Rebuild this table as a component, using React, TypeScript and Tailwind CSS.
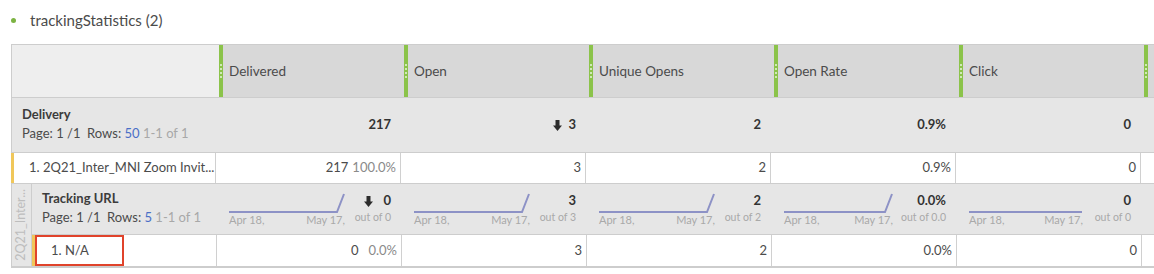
import React from "react";

interface Metric {
  name: string;
  total: string;
  totalArrow?: boolean;
  value: string;
  pct?: string;
  sub: string;
  outOf: string;
  subArrow?: boolean;
  subValue: string;
  subPct?: string;
  rise: boolean;
  spark: number;
  noDates?: boolean;
}

const metrics: Metric[] = [
  { name: "Delivered", total: "217", value: "217", pct: "100.0%", sub: "0", outOf: "out of 0", subArrow: true, subValue: "0", subPct: "0.0%", rise: true, spark: 116 },
  { name: "Open", total: "3", totalArrow: true, value: "3", sub: "3", outOf: "out of 3", subValue: "3", rise: true, spark: 116 },
  { name: "Unique Opens", total: "2", value: "2", sub: "2", outOf: "out of 2", subValue: "2", rise: true, spark: 116 },
  { name: "Open Rate", total: "0.9%", value: "0.9%", sub: "0.0%", outOf: "out of 0.0", subValue: "0.0%", rise: true, spark: 109 },
  { name: "Click", total: "0", value: "0", sub: "0", outOf: "out of 0", subValue: "0", rise: false, spark: 114 },
  // partially visible column at the right edge
  { name: "", total: "", value: "", sub: "", outOf: "", subValue: "", rise: false, spark: 116, noDates: true },
];

function DownArrow() {
  return (
    <svg width="9" height="11" viewBox="0 0 9 11" className="shrink-0">
      <rect x="2.5" y="0" width="4" height="6" fill="#2c2c2c" />
      <path d="M0 5.5 H9 L4.5 11 Z" fill="#2c2c2c" />
    </svg>
  );
}

function GripBar() {
  return (
    <div className="w-[4px] h-full bg-[#8bc34a] flex flex-col items-center justify-center gap-[2px] shrink-0">
      {[0, 1, 2, 3].map((i) => (
        <span key={i} className="w-[2px] h-[2px] rounded-full bg-[#e9f5dc]" />
      ))}
    </div>
  );
}

function Sparkline({ rise, width, noDates }: { rise: boolean; width: number; noDates?: boolean }) {
  const w = width;
  return (
    <div className="shrink-0" style={{ width: w }}>
      <svg width={w} height="20" viewBox={`0 0 ${w} 20`} className="block">
        {rise ? (
          <polyline points={`0,19 ${w - 8},19 ${w - 1},1`} fill="none" stroke="#8d92c6" strokeWidth="2" />
        ) : (
          <polyline points={`0,19 ${w - 1},19`} fill="none" stroke="#8d92c6" strokeWidth="2" />
        )}
      </svg>
      {!noDates && (
        <div className="flex justify-between text-[11px] leading-[12px] text-[#a9a9a9] mt-[1px] whitespace-nowrap">
          <span>Apr 18,</span>
          <span>May 17,</span>
        </div>
      )}
    </div>
  );
}

export default function App() {
  return (
    <div className="w-[1154px] h-[274px] overflow-hidden bg-white font-['Lato',sans-serif] text-[#4b4b4b]">
      {/* title */}
      <div className="flex items-center h-[40px] pl-[11px] pt-[1px]">
        <span className="w-[5px] h-[5px] rounded-full bg-[#7cb342]" />
        <span className="ml-[14px] text-[15px]">trackingStatistics (2)</span>
      </div>

      <div className="ml-[11px] mt-[4px] w-[1400px] border-l border-t border-[#cdcdcd]">
        {/* header */}
        <div className="flex h-[53px] border-b border-[#cdcdcd]">
          <div className="w-[207px] bg-[#eeeeee] shrink-0" />
          {metrics.map((m, i) => (
            <div key={i} className="w-[185px] shrink-0 flex bg-[#d8d8d8]">
              <GripBar />
              <div className="pl-[6px] flex items-center text-[13.5px] text-[#4b4b4b]">{m.name}</div>
            </div>
          ))}
        </div>

        {/* delivery summary */}
        <div className="flex h-[55px] bg-[#e6e6e6] border-b border-[#cdcdcd]">
          <div className="w-[205px] shrink-0 pl-[10px] pt-[8px]">
            <div className="text-[13px] font-bold text-[#3c3c3c] leading-[16px]">Delivery</div>
            <div className="text-[13px] leading-[16px] mt-[3px]">
              Page: 1 /1 &nbsp;Rows: <span className="text-[#4a6fc7]">50</span>{" "}
              <span className="text-[#a8a8a8]">1-1 of 1</span>
            </div>
          </div>
          {metrics.map((m, i) => (
            <div key={i} className="w-[185px] shrink-0 flex items-center justify-end gap-[6px] pr-[11px] text-[13px] font-bold text-[#333]">
              {m.totalArrow && <DownArrow />}
              <span>{m.total}</span>
            </div>
          ))}
        </div>

        {/* row 1 */}
        <div className="flex h-[31px] border-b border-[#cdcdcd] bg-white">
          <div className="w-[205px] shrink-0 border-l-[3px] border-[#f0c75a] -ml-[1px] border-r border-r-[#d0d0d0] flex items-center pl-[15px] text-[13px]">
            1. 2Q21_Inter_MNI Zoom Invit...
          </div>
          {metrics.map((m, i) => (
            <div key={i} className="w-[185px] shrink-0 border-r border-[#d0d0d0] flex items-center justify-end pr-[4px] text-[13px]">
              <span>{m.value}</span>
              {m.pct && <span className="ml-[4px] text-[#8a8a8a]">{m.pct}</span>}
            </div>
          ))}
        </div>

        {/* nested breakdown */}
        <div className="flex border-b-2 border-[#cdcdcd]">
          <div className="w-[20px] shrink-0 bg-[#e6e6e6] border-r border-[#cdcdcd] flex items-center justify-center overflow-hidden">
            <span className="[writing-mode:vertical-rl] rotate-180 text-[12.5px] text-[#bdbdbd] whitespace-nowrap">2Q21_Inter...</span>
          </div>
          <div className="flex flex-col">
            <div className="flex h-[51px] bg-[#e6e6e6] border-b border-[#cdcdcd]">
              <div className="w-[185px] shrink-0 pl-[10px] pt-[6px]">
                <div className="text-[13px] font-bold text-[#3c3c3c] leading-[16px]">Tracking URL</div>
                <div className="text-[13px] leading-[16px] mt-[3px]">
                  Page: 1 /1 &nbsp;Rows: <span className="text-[#4a6fc7]">5</span>{" "}
                  <span className="text-[#a8a8a8]">1-1 of 1</span>
                </div>
              </div>
              {metrics.map((m, i) => (
                <div key={i} className="w-[185px] shrink-0 flex justify-between pl-[12px] pr-[11px] pt-[9px]">
                  <Sparkline rise={m.rise} width={m.spark} noDates={m.noDates} />
                  <div className="flex flex-col items-end whitespace-nowrap">
                    <div className="flex items-center gap-[10px] h-[16px]">
                      {m.subArrow && <DownArrow />}
                      <span className="text-[13px] font-bold text-[#333]">{m.sub}</span>
                    </div>
                    <span className="text-[10.5px] text-[#a9a9a9] leading-[12px] mt-[2px]">{m.outOf}</span>
                  </div>
                </div>
              ))}
            </div>
            <div className="flex h-[31px] bg-white">
              <div className="w-[185px] shrink-0 border-l-[3px] border-[#f0c75a] border-r border-r-[#d0d0d0] flex items-center">
                <div className="w-[89px] h-[31px] border-2 border-[#e0432b] flex items-center pl-[14px] text-[13px]">
                  1. N/A
                </div>
              </div>
              {metrics.map((m, i) => (
                <div key={i} className="w-[185px] shrink-0 border-r border-[#d0d0d0] flex items-center justify-end pr-[4px] text-[13px]">
                  <span>{m.subValue}</span>
                  {m.subPct && <span className="ml-[10px] text-[#8a8a8a]">{m.subPct}</span>}
                </div>
              ))}
            </div>
          </div>
        </div>
      </div>
    </div>
  );
}
